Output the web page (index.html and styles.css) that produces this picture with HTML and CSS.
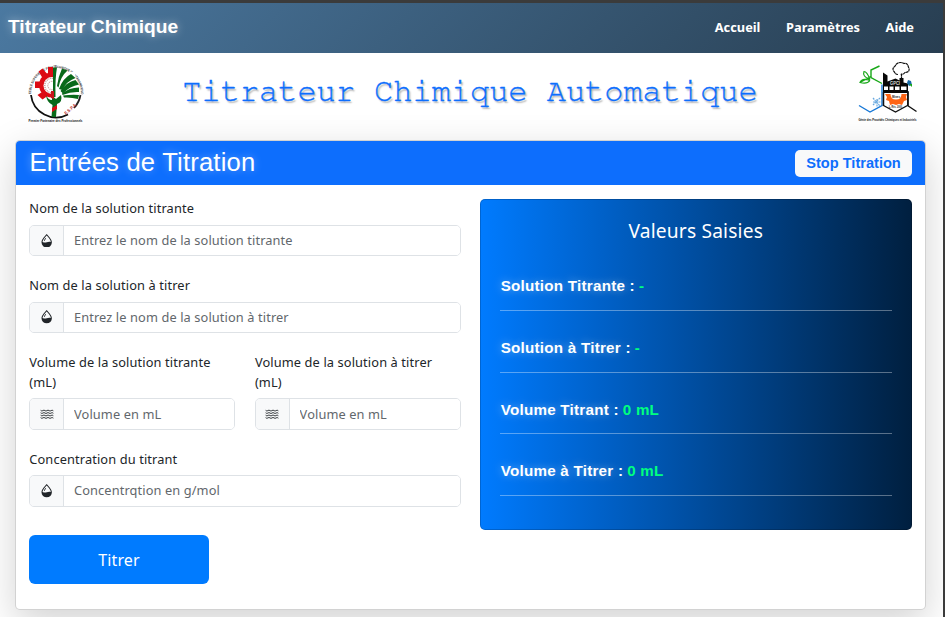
FILE: index.html
```html
<!DOCTYPE html>
<html lang="fr">
<head>
<meta charset="utf-8">
<title>Titrateur Chimique</title>
<link rel="stylesheet" href="styles.css">
</head>
<body>
<svg class="defs" width="0" height="0" aria-hidden="true">
  <symbol id="drop" viewBox="0 0 16 16">
    <path fill="currentColor" fill-rule="evenodd" d="M8 0C6 2.500 1.800 6.500 1.800 10a6.200 6 0 0 0 12.400 0C14.200 6.500 10 2.500 8 0zM8 1.800C6 4.200 3 7.200 3 9.500c1.800.6 3.200 1 5 .4s3.200-.8 5-.4C13 7.200 10 4.200 8 1.800z"/>
    <path fill="currentColor" d="M4.553 7.776c.82-1.641 1.717-2.753 2.093-3.13l.708.708c-.29.29-1.128 1.311-1.907 2.87z"/>
  </symbol>
  <symbol id="water" viewBox="0 0 16 16">
    <g fill="none" stroke="currentColor" stroke-width="1.1" stroke-linecap="round">
      <path d="M.5 3.2q1.250 1.2 2.500 0t2.500 0 2.500 0 2.500 0 2.500 0 2.500 0"/>
      <path d="M.5 6.2q1.250 1.2 2.500 0t2.500 0 2.500 0 2.500 0 2.500 0 2.500 0"/>
      <path d="M.5 9.2q1.250 1.2 2.500 0t2.500 0 2.500 0 2.500 0 2.500 0 2.500 0"/>
      <path d="M.5 12.2q1.250 1.2 2.500 0t2.500 0 2.500 0 2.500 0 2.500 0 2.500 0"/>
    </g>
  </symbol>
</svg>
<div class="page">
  <nav class="navbar">
    <a class="brand">Titrateur Chimique</a>
    <div class="links"><a>Accueil</a><a>Paramètres</a><a>Aide</a></div>
  </nav>
  <header class="hero">
    <svg class="logo" viewBox="0 0 64 64">
      <defs><path id="ring" d="M7 33A25 26 0 1 1 57 33"/></defs>
      <path d="M7 34A25.300 25.300 0 0 0 44 53.500" fill="none" stroke="#111" stroke-width="1.800"/>
      <path d="M56.500 34A25 25 0 0 1 50 47" fill="none" stroke="#222" stroke-width="1.800"/>
      <text class="tiny"><textPath href="#ring" textLength="80" lengthAdjust="spacingAndGlyphs">ECOLE SUPERIEURE POLYTECHNIQUE D'ANTANANARIVO</textPath></text>
      <g fill="#dc0a14">
        <circle cx="27.500" cy="24" r="12.500"/>
        <path d="M24 6h5v7h-5zM14.500 10.500l4-3 6 7-5 4zM11 20.500h7v6.500h-7zM13.500 34l6-4 4 5-5 3.500z"/>
      </g>
      <circle cx="28" cy="24.500" r="8.500" fill="#fff"/>
      <circle cx="28" cy="24.500" r="7.200" fill="none" stroke="#b88" stroke-width="1.2" stroke-dasharray="1 1"/>
      <circle cx="28" cy="24.500" r="4.200" fill="none" stroke="#c99" stroke-width="1.2" stroke-dasharray="1 1"/>
      <path d="M30.500 11h21v25h-21z" fill="#fff"/>
      <g fill="#08691a">
        <path d="M29 6.500h4Q31 17 31.500 36H29z"/>
        <path d="M33 25Q34.500 15 38 7.500l5.500 2q-7 6-9 17z"/>
        <path d="M35 28q4-11 12-15l4.500 4q-9 3-13 12z"/>
        <path d="M36.500 30q6-9 15-11l3.500 4.500q-9 1.500-16 9z"/>
        <path d="M38 32.500q7-6 17-6v4.500q-8-.5-16.500 3z"/>
        <path d="M39 34.500q8-1 16-.5l-1 4q-7-2-14-1.500z"/>
        <path d="M22 34q2 5 6 5v-4l4 3 5-4q2 7-4 9l-1 13h-4.500l1-12q-6-3-6.500-10z"/>
      </g>
      <path d="M27 37v-7h3v8z" fill="#c5151b"/>
      <path d="M28 47l5-3v4l-5 3z" fill="#dc0a14"/>
      <text class="espa" transform="translate(42 54) rotate(-42)" textLength="14" lengthAdjust="spacingAndGlyphs">E.S.P.A</text>
      <text class="motto" x="4.500" y="61" textLength="54" lengthAdjust="spacingAndGlyphs">Premier Partenaire des Professionnels</text>
    </svg>
    <h1>Titrateur Chimique Automatique</h1>
    <svg class="logo" viewBox="0 0 64 64">
      <g fill="none" stroke-width="1.2">
        <path d="M24.500 5l-8.500 4v7.500l11 6" stroke="#18a818" stroke-width="1.400"/>
        <path d="M15 18.500q-3-8-6-8-2 5 6 8M15 19.500q-8-3-10 2 7 2 10-2M5 21.500l11-6" stroke="#18a818"/>
        <path d="M4 44.500l11 6.500 12-6.500v-21" stroke="#1677d6" stroke-width="1.400"/>
        <path d="M18 37l7 8M25 37l-7 7M18 41h8M22 38v8" stroke="#69a9df" stroke-dasharray="2 .7"/>
        <path d="M43 13.500c-3 0-3-2-4-3-3-4 1-4 2-7 3-3 6-2 8-1 4-1 4 3 5 5 1 3-2 4-4 4-2 3-4 1-4 2M46.500 12.500v7" stroke="#111" stroke-dasharray="3 .35"/>
        <path d="M28.500 44.500l12 6.500 12-6.500 9 6M53 30v15" stroke="#111" stroke-width="1.400"/>
      </g>
      <path d="M28 11.500l4.500 3v6l8-3 4 2v-2.500h4v4.500l4.500 1V32H28z" fill="#080808"/>
      <path d="M29 25.500h4v3.500h-4zm5.500 0h4v3.500h-4zm5.500 0h4.500v3.500H40zm6 0h5.500v3.500H46z" fill="#fff"/>
      <path d="M28.500 31v14M52.800 31v14" stroke="#111" stroke-width="1.500"/>
      <path d="M30 33h5.500q0 5.500 5.500 5.500t5.500-5.500H52l-1 3 1 3-3 1-2 4-3-1-3 1-3-1-3 1-1-4-3-1 1-3z" fill="#ff6515"/>
      <path d="M53 19l3 1 1 4-3 1-2-3z" fill="#1769a7"/><path d="M54 23l3 0v3z" fill="#18a818"/>
      <text class="gpci" x="35" y="23.500" textLength="10" lengthAdjust="spacingAndGlyphs">GPCI</text>
      <text class="mines" x="37" y="36.500" textLength="8" lengthAdjust="spacingAndGlyphs">Mines</text>
      <text class="mines" x="34" y="47" textLength="13" lengthAdjust="spacingAndGlyphs">L. Rés. 2000</text>
      <text class="motto long" x="3.500" y="59.500" textLength="58" lengthAdjust="spacingAndGlyphs">Génie des Procédés Chimiques et Industriels</text>
    </svg>
  </header>
  <main class="card">
    <div class="card-head"><h2>Entrées de Titration</h2><button class="stop">Stop Titration</button></div>
    <div class="card-body">
      <form class="form">
        <div class="field"><label>Nom de la solution titrante</label>
          <div class="group"><span class="addon"><svg class="icon"><use href="#drop"/></svg></span><input placeholder="Entrez le nom de la solution titrante"></div></div>
        <div class="field"><label>Nom de la solution à titrer</label>
          <div class="group"><span class="addon"><svg class="icon"><use href="#drop"/></svg></span><input placeholder="Entrez le nom de la solution à titrer"></div></div>
        <div class="pair">
          <div class="field"><label>Volume de la solution titrante (mL)</label>
            <div class="group"><span class="addon"><svg class="icon wave"><use href="#water"/></svg></span><input placeholder="Volume en mL"></div></div>
          <div class="field"><label>Volume de la solution à titrer (mL)</label>
            <div class="group"><span class="addon"><svg class="icon wave"><use href="#water"/></svg></span><input placeholder="Volume en mL"></div></div>
        </div>
        <div class="field"><label>Concentration du titrant</label>
          <div class="group"><span class="addon"><svg class="icon"><use href="#drop"/></svg></span><input placeholder="Concentrqtion en g/mol"></div></div>
        <button type="button" class="submit">Titrer</button>
      </form>
      <section class="values">
        <h3>Valeurs Saisies</h3>
        <p>Solution Titrante : <b>-</b></p>
        <p>Solution à Titrer : <b>-</b></p>
        <p>Volume Titrant : <b>0 mL</b></p>
        <p>Volume à Titrer : <b>0 mL</b></p>
      </section>
    </div>
  </main>
</div>
</body>
</html>
```
FILE: styles.css
```css
* { box-sizing: border-box; }
body {
  margin: 0;
  height: 617px;
  overflow: hidden;
  font: 12.8px/20px "Noto Sans", sans-serif;
  color: #212529;
}
.defs { position: absolute; }
.page {
  height: 617px;
  border-top: 3px solid #3b3b3b;
  border-right: 2px solid #3b3b3b;
  background: #fff;
  overflow: hidden;
}
.navbar {
  height: 50px;
  padding: 0 29px 2px 8px;
  display: flex;
  align-items: center;
  justify-content: space-between;
  background: linear-gradient(135deg, #4b79a1, #283e51);
  color: #fff;
  font-weight: 700;
}
.brand {
  font: 700 19.2px/24px "Liberation Sans", sans-serif;
  text-shadow: 0 0 8px rgba(255, 255, 255, .5);
}
.links { display: flex; gap: 25.6px; }
.hero {
  height: 87px;
  padding: 8px 24.5px 0 23.5px;
  display: flex;
  justify-content: space-between;
}
.logo { width: 64px; height: 64px; display: block; overflow: visible; }
.tiny { font: 700 3.4px "Liberation Sans", sans-serif; fill: #333; }
.espa { font: 700 4.5px "Liberation Sans", sans-serif; fill: #b33; }
.motto { font: 700 3px "Liberation Sans", sans-serif; fill: #111; }
.long { font-size: 3.6px; }
.gpci { font: 700 4.5px "Liberation Sans", sans-serif; fill: #ddd; }
.mines { font: 700 3px "Liberation Sans", sans-serif; fill: #222; }
h1 {
  margin: 11px 0 0 -2px;
  font: 400 32px/38px "FreeMono", "Nimbus Mono PS", "Liberation Mono", monospace;
  letter-spacing: -.02px;
  color: #0d6efd;
  -webkit-text-stroke: .3px #0d6efd;
  text-shadow: 1.6px 1.6px 1.6px rgba(0, 0, 0, .3);
}
.card {
  margin: 0 17px 0 15px;
  height: 470px;
  border: 1px solid rgba(0, 0, 0, .175);
  border-radius: 5px;
  background: #fff;
  box-shadow: 0 12.8px 38.4px rgba(0, 0, 0, .175);
}
.card-head {
  height: 44px;
  padding: 0 13px 0 13.5px;
  border-radius: 4px 4px 0 0;
  background: #0d6efd;
  display: flex;
  align-items: center;
  justify-content: space-between;
}
h2 {
  margin: 0 0 2px;
  font: 400 25.6px/31px "Liberation Sans", sans-serif;
  letter-spacing: .2px;
  color: #fff;
  text-shadow: 0 0 8px rgba(255, 255, 255, .4);
}
button { border: 0; }
.stop {
  width: 117px;
  height: 27px;
  padding: 0;
  border-radius: 5px;
  background: #f8f9fa;
  color: #0d6efd;
  font: 700 14.6px/20px "Liberation Sans", sans-serif;
}
.card-body {
  padding: 14px 13px 0;
  display: grid;
  grid-template-columns: 432px 431.5px;
  gap: 19px;
  align-items: start;
}
.field { margin-bottom: 19px; }
label { display: block; margin-bottom: 6.7px; letter-spacing: .12px; padding-left: .3px; }
.group {
  height: 31.2px;
  display: flex;
  border: 1px solid #dee2e6;
  border-radius: 5px;
  overflow: hidden;
}
.addon {
  flex: 0 0 34px;
  display: flex;
  align-items: center;
  justify-content: center;
  background: #f8f9fa;
  border-right: 1px solid #dee2e6;
}
.icon { width: 13.4px; height: 13.4px; }
.wave { width: 14px; height: 13px; }
input {
  flex: 1;
  min-width: 0;
  padding: 0 10px 1px;
  border: 0;
  background: #fff;
  font: 12.8px/20px "Noto Sans", sans-serif;
  letter-spacing: .11px;
}
input::placeholder { color: #62676c; opacity: 1; }
.pair {
  display: grid;
  grid-template-columns: repeat(2, minmax(0, 1fr));
  gap: 19.2px;
}
.submit {
  display: block;
  width: 180px;
  height: 49px;
  margin-top: 28px;
  padding-top: 2px;
  border-radius: 6px;
  background: #007bff;
  color: #fff;
  font: 16px/24px "Noto Sans", sans-serif;
  letter-spacing: .1px;
}
.form { margin-top: -1px; }
.values {
  height: 331px;
  padding: 18px 19px 0;
  border: 1px solid rgba(0, 0, 0, .175);
  border-radius: 5px;
  background: linear-gradient(90deg, #007bff, #001f3f) border-box;
  color: #fff;
}
h3 {
  margin: 0 0 26px;
  text-align: center;
  font: 400 19.2px/25px "Noto Sans", sans-serif;
  letter-spacing: .18px;
}
p {
  display: flex;
  gap: 4px;
  height: 61.7px;
  margin: 0;
  padding: 6.3px 0 0 .7px;
  font: 700 15.2px/22px "Liberation Sans", sans-serif;
  letter-spacing: .24px;
  text-shadow: 0 0 8px rgba(255, 255, 255, .4);
  background: linear-gradient(rgba(255, 255, 255, .35), rgba(255, 255, 255, .35)) 0 41px / 100% 1px no-repeat;
}
b { color: #00ff7f; text-shadow: none; }
```
